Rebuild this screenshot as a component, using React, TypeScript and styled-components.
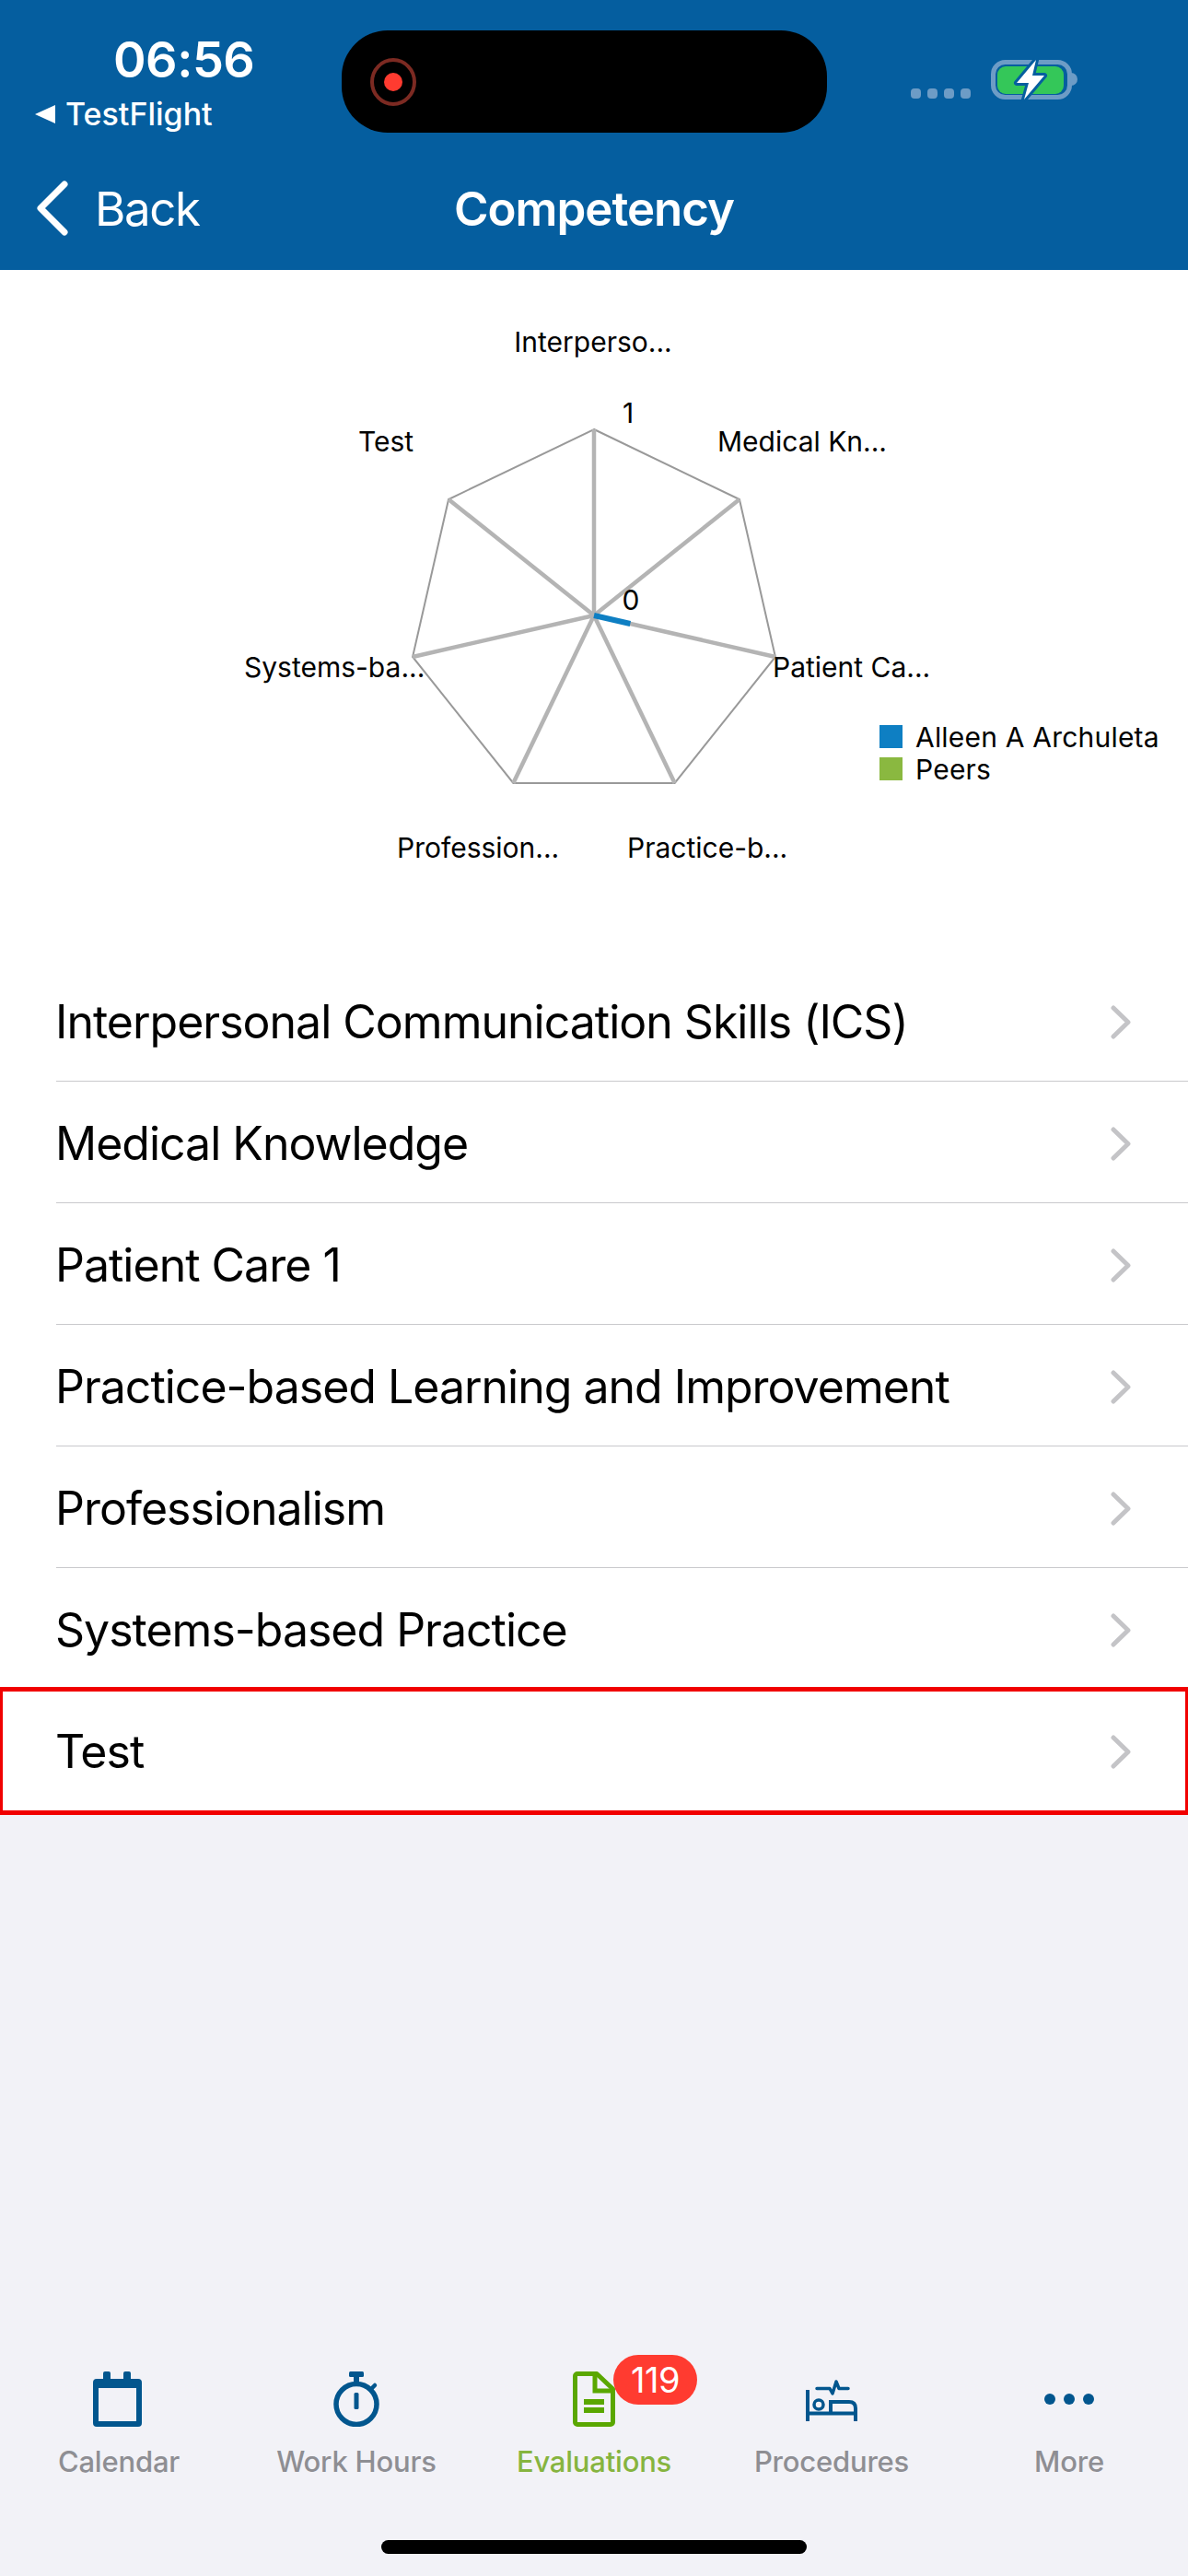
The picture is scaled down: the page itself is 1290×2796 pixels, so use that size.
import React from 'react';
import styled, { createGlobalStyle } from 'styled-components';

const FONT = 'Inter, "Noto Sans", "Liberation Sans", sans-serif';
const HEADER_BLUE = '#055e9f';
const TAB_BLUE = '#02568e';
const TAB_GREEN = '#5aa700';

const COMPETENCIES = [
  'Interpersonal Communication Skills (ICS)',
  'Medical Knowledge',
  'Patient Care 1',
  'Practice-based Learning and Improvement',
  'Professionalism',
  'Systems-based Practice',
  'Test',
];

// chart canvas starts at y=293 of the page
const CENTER = { x: 645, y: 375 };
const RADIUS = 202;
const vertices = Array.from({ length: 7 }, (_, i) => {
  const a = (i * 2 * Math.PI) / 7;
  return { x: CENTER.x + RADIUS * Math.sin(a), y: CENTER.y - RADIUS * Math.cos(a) };
});

const CHART_LABELS: { text: string; x: number; y: number; anchor?: 'start' | 'middle' }[] = [
  { text: 'Interperso...', x: 644, y: 89, anchor: 'middle' },
  { text: '1', x: 682, y: 166, anchor: 'middle' },
  { text: 'Medical Kn...', x: 779, y: 197 },
  { text: 'Test', x: 389, y: 197 },
  { text: 'Patient Ca...', x: 839, y: 442 },
  { text: 'Systems-ba...', x: 265, y: 442 },
  { text: '0', x: 685, y: 369, anchor: 'middle' },
  { text: 'Profession...', x: 431, y: 638 },
  { text: 'Practice-b...', x: 681, y: 638 },
];

const GlobalStyle = createGlobalStyle`
  html, body {
    margin: 0;
    padding: 0;
    background: #f2f2f7;
    font-family: ${FONT};
  }
  * {
    box-sizing: border-box;
  }
`;

const S = {
  Page: styled.div`
    display: flex;
    flex-direction: column;
    width: 1290px;
    height: 2796px;
    overflow: hidden;
    background: #f2f2f7;
  `,
  Header: styled.header`
    height: 293px;
    background: ${HEADER_BLUE};
    color: #fff;
  `,
  StatusBar: styled.div`
    display: flex;
    height: 176px;
    padding-top: 33px;
  `,
  StatusLeft: styled.div`
    display: flex;
    flex-direction: column;
    width: 371px;
    padding-left: 38px;
  `,
  Time: styled.div`
    margin: 0 0 0 85px;
    font-size: 54px;
    font-weight: 600;
    line-height: 64px;
    letter-spacing: -0.5px;
  `,
  BackApp: styled.div`
    display: flex;
    align-items: center;
    gap: 11px;
    margin-top: 7px;
    font-size: 34px;
    font-weight: 500;
    line-height: 40px;
  `,
  BackArrow: styled.span`
    width: 0;
    height: 0;
    border-top: 10px solid transparent;
    border-bottom: 10px solid transparent;
    border-right: 22px solid #fff;
  `,
  Island: styled.div`
    display: flex;
    align-items: center;
    width: 527px;
    height: 111px;
    padding-left: 31px;
    border-radius: 50px;
    background: #000;
  `,
  StatusRight: styled.div`
    display: flex;
    align-items: flex-start;
    padding: 30px 0 0 91px;
  `,
  NavBar: styled.nav`
    display: grid;
    grid-template-columns: 1fr auto 1fr;
    align-items: center;
    height: 100px;
  `,
  BackButton: styled.div`
    display: flex;
    align-items: center;
    gap: 28px;
    padding-left: 39px;
    font-size: 51px;
    letter-spacing: -1.4px;
  `,
  Title: styled.h1`
    margin: 0;
    font-size: 51px;
    font-weight: 600;
    letter-spacing: -1px;
  `,
  Chart: styled.section`
    position: relative;
    height: 749px;
    background: #fff;
  `,
  ChartSvg: styled.svg`
    display: block;
  `,
  ChartText: styled.text`
    font-family: ${FONT};
    font-size: 30px;
    fill: #000;
  `,
  Legend: styled.div`
    position: absolute;
    left: 955px;
    top: 489px;
    display: flex;
    flex-direction: column;
  `,
  LegendItem: styled.div`
    display: flex;
    align-items: center;
    gap: 14px;
    height: 35px;
    font-size: 30px;
    letter-spacing: 0.2px;
    color: #000;
  `,
  LegendSwatch: styled.span<{ $color: string }>`
    width: 25px;
    height: 25px;
    background: ${({ $color }) => $color};
  `,
  List: styled.div`
    background: #fff;
  `,
  Row: styled.div<{ $selected?: boolean }>`
    position: relative;
    display: flex;
    align-items: center;
    justify-content: space-between;
    height: 132px;
    padding: 2px 62px 0 60px;
    font-size: 50px;
    letter-spacing: -1px;
    color: #000;

    ${({ $selected }) =>
      $selected &&
      `
      &::after {
        content: '';
        position: absolute;
        inset: -3px 0 -4px 0;
        border-style: solid;
        border-color: #f10000;
        border-width: 5px 3px;
      }
    `}
  `,
  Separator: styled.div`
    height: 1.5px;
    margin: -1.5px 0 0 61px;
    background: #c9c9cc;
  `,
  Filler: styled.div`
    flex: 1;
  `,
  TabBar: styled.div`
    display: grid;
    grid-template-columns: repeat(5, 1fr);
    padding-top: 34px;
  `,
  Tab: styled.div`
    display: flex;
    flex-direction: column;
    align-items: center;
  `,
  TabIcon: styled.div`
    position: relative;
    display: flex;
    align-items: center;
    justify-content: center;
    width: 100px;
    height: 60px;
  `,
  TabLabel: styled.span<{ $active?: boolean }>`
    margin-top: 18px;
    font-size: 31px;
    font-weight: 500;
    letter-spacing: -0.2px;
    line-height: 40px;
    color: ${({ $active }) => ($active ? '#86b43f' : '#8e8e93')};
  `,
  Badge: styled.span`
    position: absolute;
    left: 71px;
    top: -18px;
    width: 91px;
    height: 54px;
    border-radius: 27px;
    background: #ff3b30;
    color: #fff;
    font-size: 38px;
    letter-spacing: -0.5px;
    line-height: 54px;
    text-align: center;
  `,
  HomeBar: styled.div`
    display: flex;
    justify-content: center;
    padding: 65px 0 24px;
  `,
  HomeIndicator: styled.div`
    width: 462px;
    height: 15px;
    border-radius: 8px;
    background: #000;
  `,
};

const RecordIcon = () => (
  <svg width="50" height="52" viewBox="0 0 50 52">
    <ellipse cx="25" cy="26" rx="23" ry="24" fill="none" stroke="#7c2a22" strokeWidth="4" />
    <circle cx="25" cy="26" r="10" fill="#ff3b30" />
  </svg>
);

const BatteryIcon = () => (
  <svg width="184" height="60" viewBox="0 0 184 60">
    <g fill="#6d9cc6">
      <rect x="0" y="33" width="11" height="11" rx="4" />
      <rect x="18" y="33" width="11" height="11" rx="4" />
      <rect x="36" y="33" width="11" height="11" rx="4" />
      <rect x="54" y="33" width="11" height="11" rx="4" />
    </g>
    <rect x="89.5" y="4.5" width="83" height="38" rx="13" fill="none" stroke="#6d9cc6" strokeWidth="5" />
    <rect x="94" y="9" width="72" height="30" rx="9" fill="#34c759" />
    <path d="M174 16a7 7 0 0 1 0 14z" fill="#6d9cc6" />
    <path
      d="M136 2 L115 27 L128 27 L123 45 L145 19 L132 19 Z"
      fill="#fff"
      stroke={HEADER_BLUE}
      strokeWidth="6"
      strokeLinejoin="round"
      paintOrder="stroke"
    />
  </svg>
);

const BackChevron = () => (
  <svg width="36" height="60" viewBox="0 0 36 60">
    <path d="M31 4 L5 30 L31 56" fill="none" stroke="#fff" strokeWidth="7" strokeLinecap="round" strokeLinejoin="round" />
  </svg>
);

const RowChevron = () => (
  <svg width="22" height="37" viewBox="0 0 22 37">
    <path d="M3 3 L19 18.5 L3 34" fill="none" stroke="#c4c4c7" strokeWidth="5" strokeLinecap="round" strokeLinejoin="round" />
  </svg>
);

const CalendarIcon = () => (
  <svg width="56" height="60" viewBox="0 0 56 60" fill={TAB_BLUE}>
    <rect x="11" y="0" width="8" height="12" rx="2" />
    <rect x="33" y="0" width="8" height="12" rx="2" />
    <path
      fillRule="evenodd"
      d="M4 8 H49 a4 4 0 0 1 4 4 V56 a4 4 0 0 1 -4 4 H4 a4 4 0 0 1 -4 -4 V12 a4 4 0 0 1 4 -4 Z M6 18 V54 H47 V18 Z"
    />
  </svg>
);

const StopwatchIcon = () => (
  <svg width="50" height="60" viewBox="0 0 50 60" fill={TAB_BLUE}>
    <rect x="17" y="0" width="16" height="6" rx="1.5" />
    <rect x="22" y="5" width="6" height="7" />
    <circle cx="25" cy="35.5" r="22" fill="none" stroke={TAB_BLUE} strokeWidth="5.5" />
    <rect x="22.5" y="23" width="5" height="18" rx="1.5" />
    <path d="M41 19 L45 15" stroke={TAB_BLUE} strokeWidth="4.5" strokeLinecap="round" />
  </svg>
);

const DocumentIcon = () => (
  <svg width="46" height="60" viewBox="0 0 46 60" fill="none">
    <path
      d="M26 2.5 H5 a2.5 2.5 0 0 0 -2.5 2.5 V55 a2.5 2.5 0 0 0 2.5 2.5 H41 a2.5 2.5 0 0 0 2.5 -2.5 V19 Z"
      stroke={TAB_GREEN}
      strokeWidth="5"
      strokeLinejoin="round"
    />
    <path d="M24 2 V21 H44" stroke={TAB_GREEN} strokeWidth="5" />
    <rect x="12" y="30" width="22" height="6" fill={TAB_GREEN} />
    <rect x="12" y="39" width="22" height="6" fill={TAB_GREEN} />
  </svg>
);

const BedIcon = () => (
  <svg width="56" height="48" viewBox="0 -3 56 48" fill="none" stroke={TAB_BLUE}>
    <path d="M2 11 V45" strokeWidth="4" />
    <path d="M2 36.5 H54" strokeWidth="4" />
    <path d="M54 45 V31 Q54 24 47 24 H27 V36" strokeWidth="4" />
    <circle cx="14" cy="27" r="5" strokeWidth="3.5" />
    <path d="M12 9.5 H26 L29 15 L33 2 L36 9.5 H46" strokeWidth="3.5" strokeLinejoin="round" strokeLinecap="round" />
  </svg>
);

const MoreIcon = () => (
  <svg width="54" height="12" viewBox="0 0 54 12" fill={TAB_BLUE}>
    <circle cx="6" cy="6" r="6" />
    <circle cx="27" cy="6" r="6" />
    <circle cx="48" cy="6" r="6" />
  </svg>
);

const RadarChart = () => (
  <S.ChartSvg width="1290" height="749" viewBox="0 0 1290 749">
    <polygon
      points={vertices.map(({ x, y }) => `${x},${y}`).join(' ')}
      fill="none"
      stroke="#999"
      strokeWidth="2"
    />
    {vertices.map(({ x, y }, index) => (
      <line key={index} x1={CENTER.x} y1={CENTER.y} x2={x} y2={y} stroke="#b4b4b4" strokeWidth="4.5" />
    ))}
    <line
      x1={CENTER.x}
      y1={CENTER.y}
      x2={CENTER.x + (vertices[2].x - CENTER.x) * 0.2}
      y2={CENTER.y + (vertices[2].y - CENTER.y) * 0.2}
      stroke="#0e7fc3"
      strokeWidth="6"
    />
    {CHART_LABELS.map(({ text, x, y, anchor }) => (
      <S.ChartText key={text} x={x} y={y} textAnchor={anchor ?? 'start'}>
        {text}
      </S.ChartText>
    ))}
  </S.ChartSvg>
);

const App = () => (
  <S.Page>
    <GlobalStyle />
    <S.Header>
      <S.StatusBar>
        <S.StatusLeft>
          <S.Time>06:56</S.Time>
          <S.BackApp>
            <S.BackArrow />
            TestFlight
          </S.BackApp>
        </S.StatusLeft>
        <S.Island>
          <RecordIcon />
        </S.Island>
        <S.StatusRight>
          <BatteryIcon />
        </S.StatusRight>
      </S.StatusBar>
      <S.NavBar>
        <S.BackButton>
          <BackChevron />
          Back
        </S.BackButton>
        <S.Title>Competency</S.Title>
      </S.NavBar>
    </S.Header>

    <S.Chart>
      <RadarChart />
      <S.Legend>
        <S.LegendItem>
          <S.LegendSwatch $color="#0e7fc3" />
          Alleen A Archuleta
        </S.LegendItem>
        <S.LegendItem>
          <S.LegendSwatch $color="#8ab840" />
          Peers
        </S.LegendItem>
      </S.Legend>
    </S.Chart>

    <S.List>
      {COMPETENCIES.map((name, index) => (
        <React.Fragment key={name}>
          <S.Row $selected={name === 'Test'}>
            {name}
            <RowChevron />
          </S.Row>
          {index < COMPETENCIES.length - 2 && <S.Separator />}
        </React.Fragment>
      ))}
    </S.List>

    <S.Filler />

    <S.TabBar>
      <S.Tab>
        <S.TabIcon>
          <CalendarIcon />
        </S.TabIcon>
        <S.TabLabel>Calendar</S.TabLabel>
      </S.Tab>
      <S.Tab>
        <S.TabIcon>
          <StopwatchIcon />
        </S.TabIcon>
        <S.TabLabel>Work Hours</S.TabLabel>
      </S.Tab>
      <S.Tab>
        <S.TabIcon>
          <DocumentIcon />
          <S.Badge>119</S.Badge>
        </S.TabIcon>
        <S.TabLabel $active>Evaluations</S.TabLabel>
      </S.Tab>
      <S.Tab>
        <S.TabIcon>
          <BedIcon />
        </S.TabIcon>
        <S.TabLabel>Procedures</S.TabLabel>
      </S.Tab>
      <S.Tab>
        <S.TabIcon>
          <MoreIcon />
        </S.TabIcon>
        <S.TabLabel>More</S.TabLabel>
      </S.Tab>
    </S.TabBar>
    <S.HomeBar>
      <S.HomeIndicator />
    </S.HomeBar>
  </S.Page>
);

export default App;
